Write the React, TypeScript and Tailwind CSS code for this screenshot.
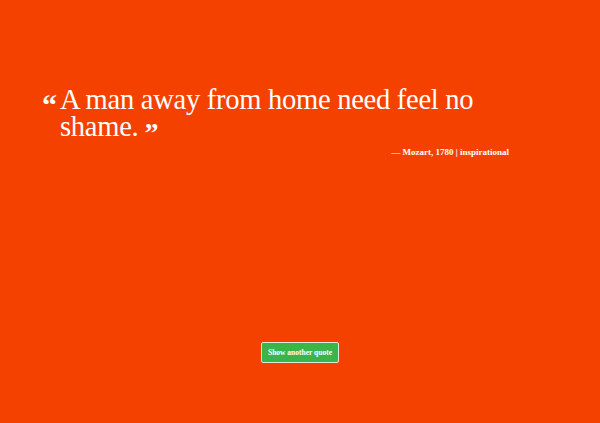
function App() {
  return (
    <main
      className="h-[423px] w-full bg-[#f44100] text-white flex flex-col"
      style={{ fontFamily: '"Liberation Serif", serif' }}
    >
      <section className="pl-[42px] pr-[91px] pt-[86px]">
        <blockquote className="flex items-start">
          <span className="text-[30px] font-bold leading-none mt-[4px] mr-[3px] w-[15px]">“</span>
          <p className="text-[28.6px] leading-[27px] tracking-[-0.3px]">
            A man away from home need feel no shame.
            <span className="ml-[6px] text-[28px] font-bold align-[-6px] leading-[10px]">”</span>
          </p>
        </blockquote>
        <p className="text-right text-[9px] font-bold mt-[6px]">— Mozart, 1780 | inspirational</p>
      </section>
      <div className="flex-1 flex items-end justify-center pb-[60px]">
        <button
          type="button"
          className="h-[21px] px-[6px] bg-[#39b54a] border border-[#dfe8d8] rounded-[2px] text-[7.5px] font-bold text-white"
        >
          Show another quote
        </button>
      </div>
    </main>
  );
}

export default App;
